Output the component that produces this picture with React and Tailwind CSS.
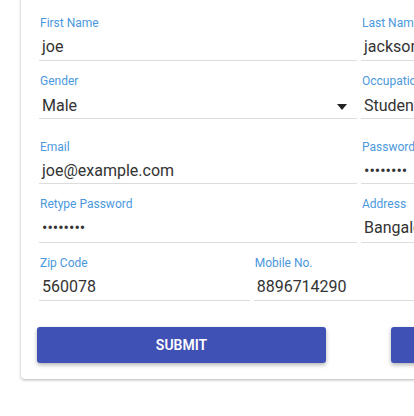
import React from 'react';

function Field({ label, value, h = 'h-[29px]', pt = 'pt-[4px]', select = false }) {
  return (
    <div className="px-[2px]">
      <div className="border-b border-[#dcdcdc]">
        <div className="h-4 pl-px text-[12px] leading-4 text-[#4a98dc] whitespace-nowrap overflow-hidden">{label}</div>
        <div className={`${h} ${pt} pl-[3px] text-[16px] text-[#333] whitespace-nowrap overflow-hidden`}>
          {select ? (
            <div className="h-6 flex items-center justify-between">
              <span className="leading-6">{value}</span>
              <svg width="10" height="6" viewBox="0 0 10 6" className="mr-[10px] mt-[2px]">
                <path d="M0 0 L10 0 L5 6 Z" fill="#222" />
              </svg>
            </div>
          ) : (
            <div className="leading-6">{value}</div>
          )}
        </div>
      </div>
    </div>
  );
}

export default function App() {
  return (
    <div className="w-[414px] h-[416px] overflow-hidden bg-white font-['Roboto',sans-serif]">
      <div className="ml-[21px] -mt-[8px] pt-[23px] pb-4 px-4 w-[676px] bg-white rounded shadow-[0_1px_3px_rgba(0,0,0,0.3)]">
        <div className="w-[644px]">
          {/* name */}
          <div className="grid grid-cols-2">
            <Field label="First Name" value="joe" />
            <Field label="Last Name" value="jackson" />
          </div>

          {/* gender / occupation */}
          <div className="grid grid-cols-2 mt-3">
            <Field label="Gender" value="Male" pt="pt-[5px]" select />
            <Field label="Occupation" value="Student" pt="pt-[5px]" select />
          </div>

          {/* email / password */}
          <div className="grid grid-cols-2 mt-5">
            <Field label="Email" value="joe@example.com" h="h-[28px]" />
            <Field label="Password" value="••••••••" h="h-[28px]" />
          </div>

          <div className="grid grid-cols-2 mt-3">
            <Field label="Retype Password" value="••••••••" h="h-[30px]" />
            <Field label="Address" value="Bangalore" h="h-[30px]" />
          </div>

          <div className="grid grid-cols-3 mt-3">
            <Field label="Zip Code" value="560078" />
            <Field label="Mobile No." value="8896714290" />
            <Field label="Country" value="India" />
          </div>

          <div className="flex gap-[65px] mt-[26px]">
            <button className="w-[289px] h-9 shrink-0 rounded-[3px] bg-[#3f51b5] text-white text-[14px] font-semibold uppercase shadow-[0_2px_4px_rgba(0,0,0,0.3)]">
              Submit
            </button>
            <button className="w-[289px] h-9 shrink-0 rounded-[3px] bg-[#3f51b5] text-white text-[14px] font-semibold uppercase shadow-[0_2px_4px_rgba(0,0,0,0.3)]">
              Reset
            </button>
          </div>
        </div>
      </div>
    </div>
  );
}
